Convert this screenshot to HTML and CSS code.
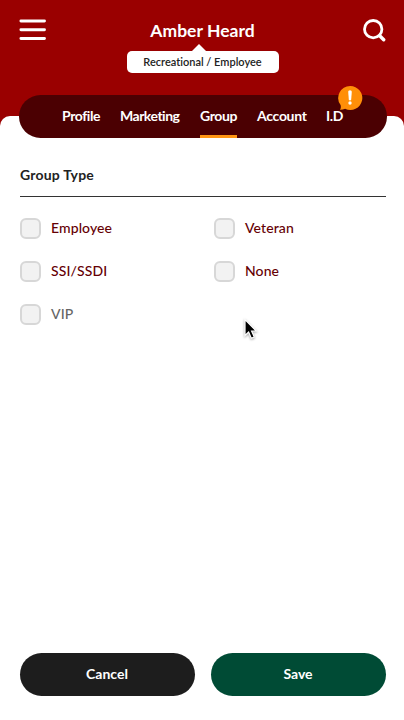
FILE: index.html
```html
<!DOCTYPE html>
<html lang="en">
<head>
<meta charset="utf-8">
<meta name="viewport" content="width=device-width, initial-scale=1">
<title>Amber Heard</title>
<link rel="stylesheet" href="styles.css">
</head>
<body>
<div class="app">
  <header class="header">
    <svg class="menu" width="28" height="24" viewBox="0 0 28 24" fill="none" stroke="#fff" stroke-width="2.9" stroke-linecap="round"><path d="M1.900 3h23.600M1.900 11.700h23.600M1.900 20.500h23.600"/></svg>
    <div class="identity">
      <h1 class="name">Amber Heard</h1>
      <div class="role">Recreational / Employee</div>
    </div>
    <svg class="search" width="24" height="24" viewBox="0 0 24 24" fill="none" stroke="#fff" stroke-width="2.800" stroke-linecap="round"><circle cx="11.200" cy="11.200" r="8.700"/><path stroke-width="3.400" d="M17.700 17.700l4 4"/></svg>
  </header>
  <main class="sheet">
    <nav class="tabs">
      <a class="tab profile">Profile</a>
      <a class="tab marketing">Marketing</a>
      <a class="tab group active">Group</a>
      <a class="tab account">Account</a>
      <a class="tab id">I.D
        <svg class="alert" width="26" height="26" viewBox="0 0 26 26"><path fill="#ff8f08" d="M13.200 1A12 12 0 1 1 8.100 23.800Q5.700 24.800 3 24.700Q4.300 22.800 3.600 20.100A12 12 0 0 1 13.200 1Z"/><path fill="#fff" d="M11.200 6.800Q11.200 5.300 13 5.300T14.800 6.800L14.200 14.300Q14 15.500 13 15.500T11.800 14.300Z"/><circle cx="13" cy="18" r="1.700" fill="#fff"/></svg>
      </a>
    </nav>
    <section class="content">
      <h2 class="heading">Group Type</h2>
      <div class="options">
        <label class="option"><i class="box"></i><span>Employee</span></label>
        <label class="option"><i class="box"></i><span>Veteran</span></label>
        <label class="option"><i class="box"></i><span>SSI/SSDI</span></label>
        <label class="option"><i class="box"></i><span>None</span></label>
        <label class="option muted"><i class="box"></i><span>VIP</span></label>
      </div>
    </section>
    <footer class="actions">
      <button class="button cancel">Cancel</button>
      <button class="button save">Save</button>
    </footer>
  </main>
  <svg class="cursor" width="16" height="24" viewBox="0 0 16 24"><path fill="#000" stroke="#fff" stroke-width="1.200" d="M2 1.500V17.500L5.600 14.100L8.300 20.300L11.300 19L8.600 13H13.300Z"/></svg>
</div>
</body>
</html>
```

FILE: styles.css
```css
* { box-sizing: border-box; }
body { margin: 0; font-family: Lato, "Noto Sans", sans-serif; font-variant-ligatures: none; }
.app {
  position: relative;
  display: flex;
  flex-direction: column;
  width: 404px;
  height: 720px;
  overflow: hidden;
  background: #9a0000;
}
.header {
  display: flex;
  justify-content: space-between;
  align-items: flex-start;
  height: 116px;
  padding: 18px 18px 0 19px;
}
.menu, .search { display: block; }
.identity { display: flex; flex-direction: column; align-items: center; margin-left: -4px; }
.name { margin: 0; height: 33px; font-size: 17.5px; line-height: 26px; font-weight: 700; color: #fff; white-space: nowrap; letter-spacing: .02px; }
.role {
  position: relative;
  width: 152px;
  height: 22px;
  border-radius: 5px;
  background: #fff;
  color: #222;
  text-align: center;
  font-size: 11px;
  line-height: 21px;
  font-weight: 600;
  white-space: nowrap;
}
.role::before {
  content: "";
  position: absolute;
  left: 65px;
  top: -7px;
  border: 7px solid transparent;
  border-top: 0;
  border-bottom-color: #fff;
}
.sheet {
  flex: 1;
  display: flex;
  flex-direction: column;
  border-radius: 10px 10px 0 0;
  background: #fff;
}
.tabs {
  display: flex;
  gap: 20px;
  height: 43px;
  margin: -21px 17.5px 0 19px;
  padding-left: 43px;
  border-radius: 22px;
  background: #4b0002;
  color: #fff;
  font-size: 14px;
  line-height: 42px;
  font-weight: 700;
  letter-spacing: -.4px;
  white-space: nowrap;
}
.tab { position: relative; height: 43px; }
.profile { width: 38px; }
.marketing { width: 60px; letter-spacing: -.5px; }
.group { width: 37px; }
.account { width: 49px; letter-spacing: -.3px; }
.id { width: 17px; }
.active { border-bottom: 3px solid #ff9513; }
.alert { position: absolute; left: 11px; top: -10px; }
.content { flex: 1; padding: 27px 18.5px 0 20px; }
.heading { margin: 0; height: 32px; border-bottom: 1px solid #333; font-size: 14px; line-height: 20px; font-weight: 700; letter-spacing: .2px; color: #222; }
.options { display: grid; grid-template-columns: 194px 1fr; grid-auto-rows: 43px; padding-top: 10px; }
.option { display: flex; align-items: center; gap: 10px; font-size: 14px; font-weight: 500; color: #650004; white-space: nowrap; letter-spacing: .1px; }
.option span { position: relative; top: -1px; }
.box { width: 21px; height: 21px; border: 2px solid #d7d7d7; border-radius: 6px; background: #f2f2f2; }
.muted { color: #666; }
.actions { display: grid; grid-template-columns: 175px 175px; gap: 16px; padding: 0 0 24.5px 19.5px; }
.button { height: 43px; padding: 0; border: 0; border-radius: 22px; color: #fff; font: 700 14px/42px Lato, "Noto Sans", sans-serif; }
.cancel { background: #1d1d1d; }
.save { background: #004b35; }
.cursor { position: absolute; left: 243px; top: 318px; filter: drop-shadow(0 1px 1px rgba(0, 0, 0, .35)); }
```
